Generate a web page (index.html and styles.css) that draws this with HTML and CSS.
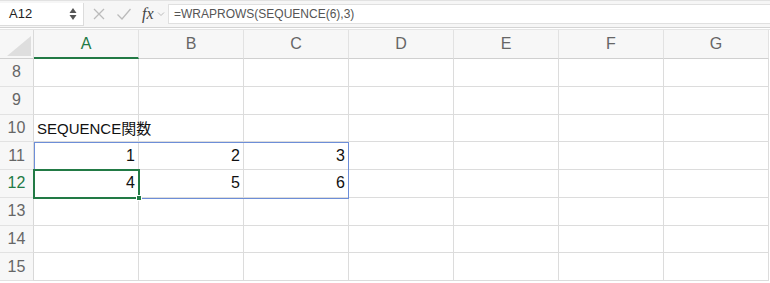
FILE: index.html
```html
<!DOCTYPE html>
<html lang="ja">
<head>
    <meta charset="UTF-8">
    <title>WRAPROWS</title>
    <link rel="stylesheet" href="styles.css">
</head>
<body>
    <div class="toolbar">
        <div class="name-box">
            <span>A12</span>
            <svg class="stepper" width="8" height="16" viewBox="0 0 8 16">
                <path d="M4 2 L7.5 7 L0.5 7 Z" fill="#555"/>
                <path d="M4 14 L7.5 9 L0.5 9 Z" fill="#555"/>
            </svg>
        </div>
        <div class="actions">
            <svg width="14" height="14" viewBox="0 0 14 14"><path d="M2 2 L12 12 M12 2 L2 12" stroke="#bbb" stroke-width="1.3"/></svg>
            <svg width="16" height="14" viewBox="0 0 16 14"><path d="M1.5 7.5 L6 12 L14.5 2" stroke="#bbb" stroke-width="1.3" fill="none"/></svg>
            <span class="fx">fx</span>
            <svg width="8" height="6" viewBox="0 0 8 6"><path d="M1 1.5 L4 4.5 L7 1.5" stroke="#bbb" stroke-width="1" fill="none"/></svg>
        </div>
        <div class="formula">=WRAPROWS(SEQUENCE(6),3)</div>
    </div>

    <div class="sheet">
        <div class="corner"><div class="tri"></div></div>
        <div class="col-head active">A</div>
        <div class="col-head">B</div>
        <div class="col-head">C</div>
        <div class="col-head">D</div>
        <div class="col-head">E</div>
        <div class="col-head">F</div>
        <div class="col-head">G</div>

        <div class="row-head">8</div>
        <div class="cell"></div><div class="cell"></div><div class="cell"></div><div class="cell"></div><div class="cell"></div><div class="cell"></div><div class="cell"></div>

        <div class="row-head">9</div>
        <div class="cell"></div><div class="cell"></div><div class="cell"></div><div class="cell"></div><div class="cell"></div><div class="cell"></div><div class="cell"></div>

        <div class="row-head">10</div>
        <div class="cell text"><span>SEQUENCE関数</span></div><div class="cell"></div><div class="cell"></div><div class="cell"></div><div class="cell"></div><div class="cell"></div><div class="cell"></div>

        <div class="row-head">11</div>
        <div class="cell num">1</div><div class="cell num">2</div><div class="cell num">3</div><div class="cell"></div><div class="cell"></div><div class="cell"></div><div class="cell"></div>

        <div class="row-head active">12</div>
        <div class="cell num">4</div><div class="cell num">5</div><div class="cell num">6</div><div class="cell"></div><div class="cell"></div><div class="cell"></div><div class="cell"></div>

        <div class="row-head">13</div>
        <div class="cell"></div><div class="cell"></div><div class="cell"></div><div class="cell"></div><div class="cell"></div><div class="cell"></div><div class="cell"></div>

        <div class="row-head">14</div>
        <div class="cell"></div><div class="cell"></div><div class="cell"></div><div class="cell"></div><div class="cell"></div><div class="cell"></div><div class="cell"></div>

        <div class="row-head">15</div>
        <div class="cell"></div><div class="cell"></div><div class="cell"></div><div class="cell"></div><div class="cell"></div><div class="cell"></div><div class="cell"></div>

        <!-- selection overlays -->
        <div class="range"></div>
        <div class="active-cell"><div class="handle"></div></div>
    </div>
</body>
</html>
```

FILE: styles.css
```css
* {
    margin: 0;
    padding: 0;
    box-sizing: border-box;
}

body {
    background: #fff;
    font-family: "Liberation Sans", "Noto Sans CJK JP", sans-serif;
    width: 770px;
    overflow: hidden;
}

.toolbar {
    display: flex;
    align-items: center;
    height: 28px;
    background: #f6f6f6;
    border-top: 1px solid #e2e2e2;
    border-bottom: 1px solid #d4d4d4;
    padding: 0 0 1px 0;
}

.name-box {
    display: flex;
    align-items: center;
    justify-content: space-between;
    width: 84px;
    height: 23px;
    margin-top: 1px;
    background: #fff;
    border-right: 1px solid #dcdcdc;
    border-bottom: 1px solid #dcdcdc;
    padding: 0 6px 0 9px;
    font-size: 13px;
    color: #222;
}

.actions {
    display: flex;
    align-items: center;
    width: 84px;
    padding-left: 8px;
    gap: 10px;
}

.actions .fx {
    font-family: "Liberation Serif", serif;
    font-style: italic;
    font-size: 16px;
    color: #444;
    margin-right: -7px;
}

.formula {
    flex: 1;
    height: 20px;
    margin-top: 1px;
    background: #fff;
    border: 1px solid #e0e0e0;
    border-right: none;
    padding-left: 5px;
    font-size: 12px;
    line-height: 18px;
    color: #555;
}

.sheet {
    position: relative;
    display: grid;
    grid-template-columns: 34px repeat(7, 105px);
    grid-template-rows: 29px repeat(8, 27.75px);
    border-top: 1px solid #e4e4e4;
    margin-top: 1px;
}

.corner {
    position: relative;
    background: #f7f7f7;
    border-right: 1px solid #dadada;
    border-bottom: 1px solid #d0d0d0;
}

.corner .tri {
    position: absolute;
    right: 2px;
    bottom: 2px;
    width: 0;
    height: 0;
    border-left: 24px solid transparent;
    border-bottom: 20px solid #dedede;
}

.col-head {
    display: flex;
    align-items: center;
    justify-content: center;
    background: #f7f7f7;
    border-right: 1px solid #e2e2e2;
    border-bottom: 1px solid #d0d0d0;
    font-size: 16px;
    color: #666;
}

.col-head.active {
    color: #227a45;
    border-bottom: 2px solid #227a45;
}

.row-head {
    display: flex;
    align-items: center;
    justify-content: center;
    background: #f7f7f7;
    border-right: 1px solid #d8d8d8;
    border-bottom: 1px solid #e2e2e2;
    font-size: 16px;
    color: #666;
}

.row-head.active {
    color: #227a45;
}

.cell {
    display: flex;
    align-items: center;
    border-right: 1px solid #dcdcdc;
    border-bottom: 1px solid #dcdcdc;
    font-size: 15px;
    color: #111;
    padding: 0 3px;
    white-space: nowrap;
    min-width: 0;
}

.cell.text {
    position: relative;
    z-index: 1;
    overflow: visible;
}

.cell.num {
    justify-content: flex-end;
    font-size: 16px;
}

.range {
    position: absolute;
    left: 34px;
    top: 112px;
    width: 315px;
    height: 57px;
    border: 1px solid #6d8ed8;
}

.active-cell {
    position: absolute;
    left: 33px;
    top: 139px;
    width: 107px;
    height: 30px;
    border: 2px solid #227a45;
}

.active-cell .handle {
    position: absolute;
    right: -4px;
    bottom: -4px;
    width: 6px;
    height: 6px;
    background: #227a45;
    border: 1px solid #fff;
}
```
